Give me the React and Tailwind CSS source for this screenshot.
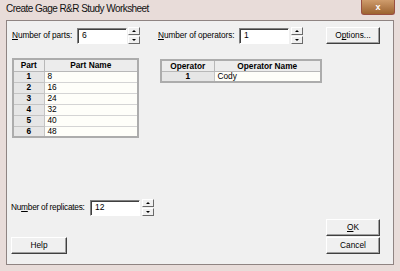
import React from 'react';

const font = { fontFamily: '"Liberation Sans", Arial, sans-serif' };

const Spinner = () => (
    <div className="flex flex-col w-[12px] h-[17px] gap-[1px]">
        {[0, 1].map((i) => (
            <div key={i} className="flex-1 flex items-center justify-center bg-[#f0f0f0] border border-t-white border-l-white border-r-[#6a6a6a] border-b-[#6a6a6a]">
                <div className={i === 0
                    ? 'w-0 h-0 border-l-[2px] border-r-[2px] border-b-[2px] border-l-transparent border-r-transparent border-b-black'
                    : 'w-0 h-0 border-l-[2px] border-r-[2px] border-t-[2px] border-l-transparent border-r-transparent border-t-black'} />
            </div>
        ))}
    </div>
);

const Field = ({ value }) => (
    <div className="w-[50px] h-[16px] bg-white border border-t-[#808080] border-l-[#808080] border-r-white border-b-white shadow-[inset_1px_1px_0_#404040] flex items-center pl-[4px] text-[8.5px] text-black">
        {value}
    </div>
);

const Button = ({ children, className = '' }) => (
    <div className={`w-[54px] h-[17px] bg-[#f0f0f0] border border-t-white border-l-white border-r-[#404040] border-b-[#404040] shadow-[inset_-1px_-1px_0_#a0a0a0] flex items-center justify-center text-[8.3px] text-black ${className}`}>
        {children}
    </div>
);

const App = () => {
    const parts = ['8', '16', '24', '32', '40', '48'];

    return (
        <div className="w-[400px] h-[271px] bg-[#e8dcd9] flex flex-col overflow-hidden" style={font}>
            {/* title bar */}
            <div className="h-[20px] flex items-start shrink-0">
                <div className="pl-[6px] pt-[4px] text-[10px] tracking-[-0.55px] text-[#111] leading-none whitespace-nowrap">Create Gage R&amp;R Study Worksheet</div>
                <div className="ml-auto mr-[5px] w-[34px] h-[15px] rounded-b-[3px] border border-t-0 border-[#9a4f42] bg-gradient-to-b from-[#cf9c6c] to-[#9c6330] flex items-center justify-center text-white text-[9px] font-bold leading-none">
                    x
                </div>
            </div>

            {/* client area */}
            <div className="flex-1 mx-[6px] mb-[6px] border border-[#8f8482] bg-[#f0f0f0] flex flex-col text-[8.3px] text-black">
                {/* row 1 */}
                <div className="flex items-center mt-[6px] pl-[5px] pr-[13px] h-[17px] whitespace-nowrap">
                    <span className="w-[65px] shrink-0 tracking-[-0.1px]"><span className="underline">N</span>umber of parts:</span>
                    <Field value="6" />
                    <div className="ml-[1px]"><Spinner /></div>
                    <span className="ml-[18px] w-[81px] shrink-0 tracking-[-0.1px]"><span className="underline">N</span>umber of operators:</span>
                    <Field value="1" />
                    <div className="ml-[2px]"><Spinner /></div>
                    <Button className="ml-auto">O<span className="underline">p</span>tions...</Button>
                </div>

                {/* tables */}
                <div className="flex items-start mt-[14px] pl-[5px]">
                    <table className="w-[127px] border-collapse border-2 border-[#acacac] text-[8.3px]">
                        <thead>
                            <tr className="h-[12px] bg-[#ececec]">
                                <th className="w-[31px] border border-[#b8b8b8] font-bold p-0 leading-none">Part</th>
                                <th className="border border-[#b8b8b8] font-bold p-0 leading-none">Part Name</th>
                            </tr>
                        </thead>
                        <tbody>
                            {parts.map((p, i) => (
                                <tr key={i} className="h-[11px]">
                                    <td className="bg-[#e6e6e6] border border-[#c4c4c4] text-center font-bold p-0 leading-none">{i + 1}</td>
                                    <td className="bg-[#fefef9] border border-[#d4d4d4] pl-[3px] p-0 leading-none">{p}</td>
                                </tr>
                            ))}
                        </tbody>
                    </table>

                    <table className="ml-[21px] mt-[1px] w-[162px] border-collapse border-2 border-[#acacac] text-[8.3px]">
                        <thead>
                            <tr className="h-[11px] bg-[#ececec]">
                                <th className="w-[53px] border border-[#b8b8b8] font-bold p-0 leading-none">Operator</th>
                                <th className="border border-[#b8b8b8] font-bold p-0 leading-none">Operator Name</th>
                            </tr>
                        </thead>
                        <tbody>
                            <tr className="h-[11px]">
                                <td className="bg-[#e6e6e6] border border-[#c4c4c4] text-center font-bold p-0 leading-none">1</td>
                                <td className="bg-[#fefef9] border border-[#d4d4d4] pl-[3px] p-0 leading-none">Cody</td>
                            </tr>
                        </tbody>
                    </table>
                </div>

                <div className="flex-1" />

                {/* bottom */}
                <div className="flex items-end pl-[4px] pr-[13px] mb-[10px]">
                    <div className="flex flex-col">
                        <div className="flex items-center h-[17px] whitespace-nowrap">
                            <span className="w-[79px] shrink-0 tracking-[-0.25px]">Nu<span className="underline">m</span>ber of replicates:</span>
                            <Field value="12" />
                            <div className="ml-[2px]"><Spinner /></div>
                        </div>
                        <Button className="mt-[21px] w-[56px]">Help</Button>
                    </div>
                    <div className="ml-auto flex flex-col gap-[1px]">
                        <Button><span className="underline">O</span>K</Button>
                        <Button>Cancel</Button>
                    </div>
                </div>
            </div>
        </div>
    );
};

export default App;
